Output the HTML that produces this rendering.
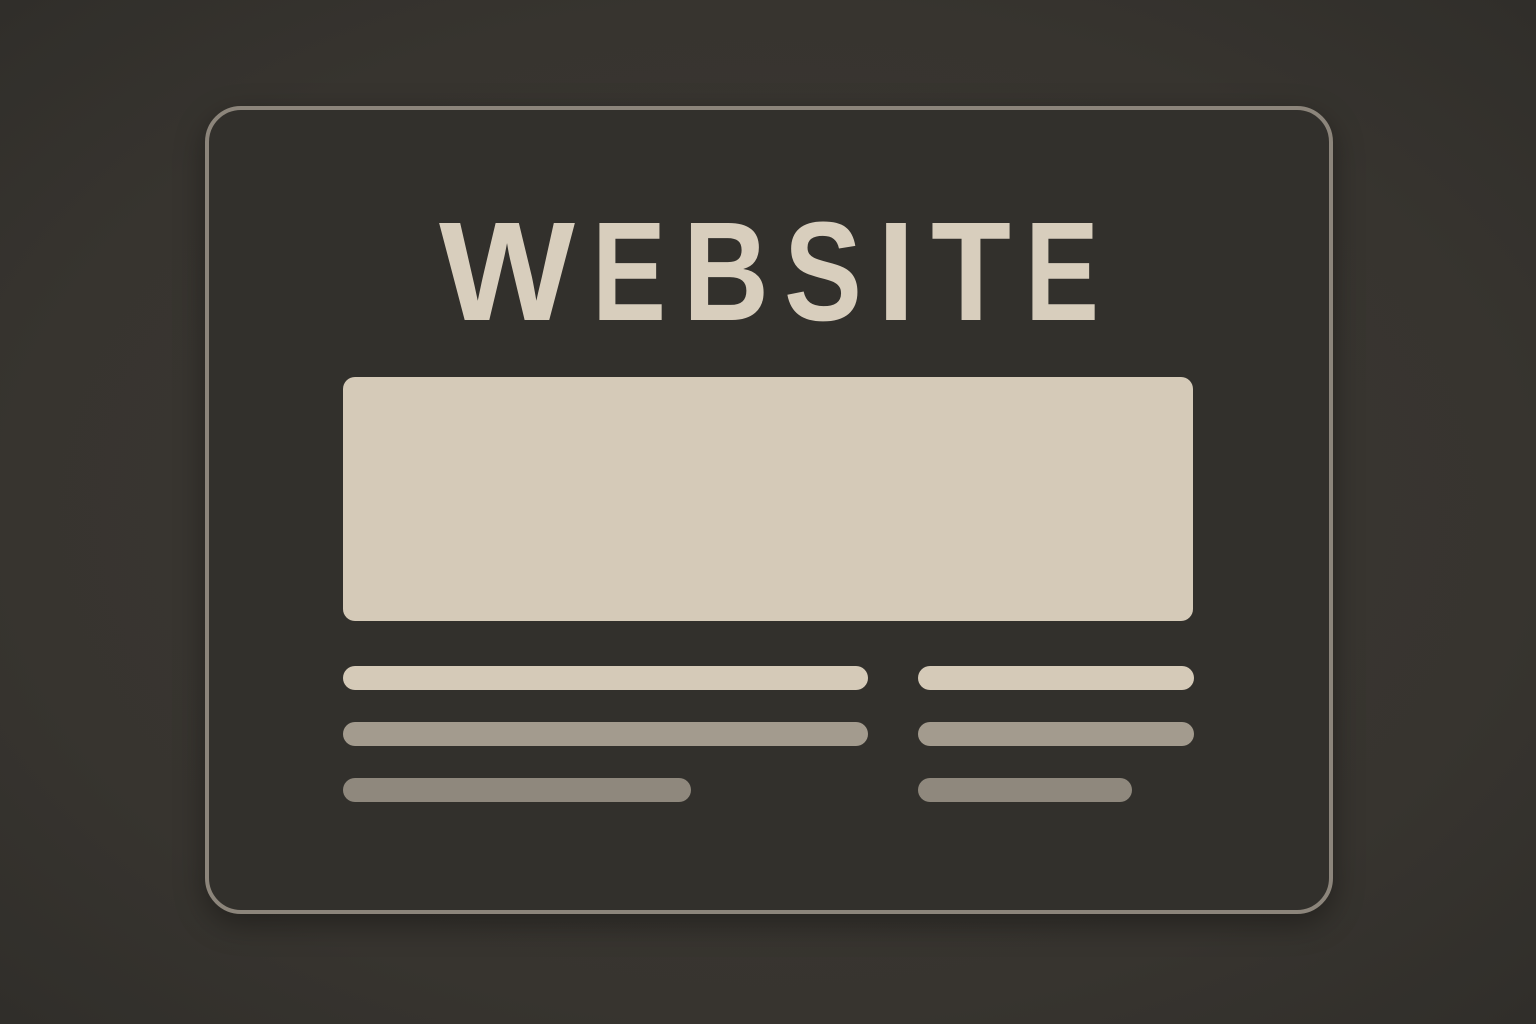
<!DOCTYPE html>
<html><head><meta charset="utf-8"><style>
html,body{margin:0;padding:0}
body{width:1536px;height:1024px;background:radial-gradient(ellipse at center,#3b3833 0%,#37342f 70%,#302e2a 100%);position:relative;overflow:hidden;font-family:"Liberation Sans",sans-serif}
.card{position:absolute;left:205px;top:106px;width:1120px;height:800px;border:4px solid #8c857b;border-radius:36px;background:#32302c;box-shadow:0 10px 30px rgba(0,0,0,.35)}
svg.t{position:absolute;left:0;top:0}
svg.t text{font-family:"Liberation Sans",sans-serif;font-weight:bold;font-size:141px;fill:#d8cebd}
.hero{position:absolute;left:343px;top:377px;width:850px;height:244px;background:#d5cab8;border-radius:12px}
.bar{position:absolute;height:24px;border-radius:12px}
.l{background:#d5cab8}.m{background:#a39b8e}.d{background:#8f887d}
</style></head><body>
<div class="card"></div>
<svg class="t" width="1536" height="400">
<text x="439" y="320" textLength="136" lengthAdjust="spacingAndGlyphs">W</text>
<text x="592" y="320" textLength="74" lengthAdjust="spacingAndGlyphs">E</text>
<text x="683" y="320" textLength="86" lengthAdjust="spacingAndGlyphs">B</text>
<text x="784" y="320" textLength="78" lengthAdjust="spacingAndGlyphs">S</text>
<text x="877" y="320" textLength="38" lengthAdjust="spacingAndGlyphs">I</text>
<text x="931" y="320" textLength="80" lengthAdjust="spacingAndGlyphs">T</text>
<text x="1025" y="320" textLength="74" lengthAdjust="spacingAndGlyphs">E</text>
</svg>
<div class="hero"></div>
<div class="bar l" style="left:343px;top:666px;width:525px"></div>
<div class="bar l" style="left:918px;top:666px;width:276px"></div>
<div class="bar m" style="left:343px;top:722px;width:525px"></div>
<div class="bar m" style="left:918px;top:722px;width:276px"></div>
<div class="bar d" style="left:343px;top:778px;width:348px"></div>
<div class="bar d" style="left:918px;top:778px;width:214px"></div>
</body></html>
